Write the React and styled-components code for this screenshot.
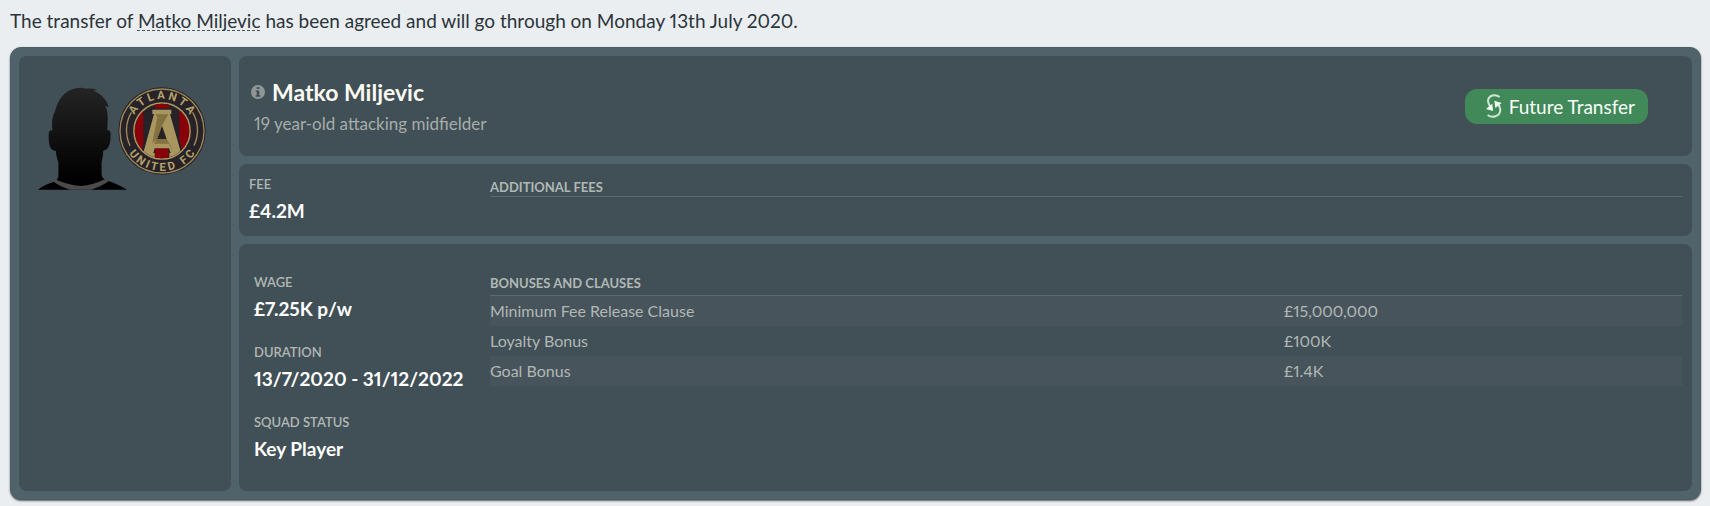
import React from "react";
import styled, { createGlobalStyle } from "styled-components";

const GlobalStyle = createGlobalStyle`
  * { box-sizing: border-box; }
  body {
    margin: 0;
    background: #ebeef1;
    color: #2a343a;
    font-family: Lato, "Liberation Sans", sans-serif;
    font-variant-numeric: proportional-nums;
  }
`;

const Page = styled.main`
  padding: 8px 9px 4px 10px;
`;

const Message = styled.p`
  margin: 0 0 13px;
  font-size: 19px;
  line-height: 26px;
`;

const PlayerLink = styled.a`
  color: inherit;
  text-decoration: underline dashed #4a555b 1px;
  text-underline-offset: 2px;
  text-decoration-skip-ink: none;
`;

const Card = styled.article`
  display: grid;
  grid-template-columns: 212px minmax(0, 1fr);
  gap: 8px;
  padding: 8px;
  border: 1px solid #4b5e64;
  border-radius: 11px;
  background: #50636a;
  box-shadow: 0 1px 2px rgba(0, 0, 0, 0.6);
`;

const Panel = styled.section`
  border-radius: 8px;
  background: #414f56;
`;

const Portrait = styled(Panel)`
  display: flex;
  align-items: flex-start;
  padding: 31px 0 0 19px;
`;

const Silhouette = styled.svg`
  flex: none;
  width: 89px;
  height: 103px;
`;

const Crest = styled.svg`
  flex: none;
  width: 88px;
  height: 88px;
  margin-left: -9px;
`;

const Details = styled.div`
  display: grid;
  gap: 8px;
`;

const Header = styled(Panel)`
  display: flex;
  align-items: center;
  justify-content: space-between;
  min-height: 100px;
  padding: 0 44px 0 12px;
`;

const Name = styled.h1`
  display: flex;
  align-items: center;
  gap: 7px;
  margin: 0;
  padding: 2px 0 6px;
  color: #fbfbf3;
  font-size: 23px;
  line-height: 28px;
  font-weight: 700;
`;

const InfoIcon = styled.svg`
  width: 14px;
  height: 14px;
`;

const Summary = styled.p`
  margin: 0;
  padding-left: 3px;
  color: #a6adab;
  font-size: 17px;
  line-height: 24px;
`;

const Badge = styled.span`
  display: flex;
  align-items: center;
  gap: 7px;
  height: 35px;
  padding: 0 13px 0 21px;
  border-radius: 12px;
  background: #418959;
  color: #fbfffb;
  font-size: 19px;
`;

const SwapIcon = styled.svg`
  width: 16px;
  height: 24px;
`;

const TermsPanel = styled(Panel)`
  display: grid;
  grid-template-columns: 251px minmax(0, 1fr);
  padding: ${(p) => (p.$roomy ? "30px 10px 30px 0" : "12px 10px 13px 0")};
`;

const Stats = styled.dl`
  display: grid;
  gap: 23px;
  margin: 0;
  padding-left: ${(p) => (p.$roomy ? "15px" : "10px")};
`;

const Stat = styled.div`
  display: grid;
  gap: 7px;
`;

const StatLabel = styled.dt`
  color: #b0b8b5;
  font-size: 13px;
  line-height: 16px;
  font-weight: 600;
  text-transform: uppercase;
`;

const StatValue = styled.dd`
  margin: 0;
  color: #ffffff;
  font-size: 19px;
  line-height: 24px;
  font-weight: 700;
  white-space: nowrap;
`;

const FeesHeading = styled.h2`
  align-self: start;
  margin: 0;
  padding: 3px 0 1px;
  border-bottom: 1px solid #586a72;
  color: #b0b8b5;
  font-size: 13px;
  line-height: 16px;
  font-weight: 700;
  text-transform: uppercase;
`;

const Clauses = styled.table`
  align-self: start;
  width: 100%;
  border-collapse: collapse;
  table-layout: fixed;
  color: #b0b8b5;
  font-size: 16px;
`;

const ValueColumn = styled.col`
  width: 33.4%;
`;

const ClausesHead = styled.th`
  height: 21px;
  padding: 1px 0 4px;
  border-bottom: 1px solid #586a72;
  font-size: 13px;
  line-height: 16px;
  font-weight: 700;
  text-align: left;
  text-transform: uppercase;
`;

const ClauseRow = styled.tr`
  height: 30px;
  &:nth-child(odd) { background: #48545c; }
`;

const ClauseName = styled.th`
  padding: 0;
  font-weight: 400;
  text-align: left;
`;

const ClauseValue = styled.td`
  padding: 0;
`;

const terms = [
  ["Wage", "£7.25K p/w"],
  ["Duration", "13/7/2020 - 31/12/2022"],
  ["Squad status", "Key Player"],
];

const clauses = [
  ["Minimum Fee Release Clause", "£15,000,000"],
  ["Loyalty Bonus", "£100K"],
  ["Goal Bonus", "£1.4K"],
];

function PlayerSilhouette() {
  return (
    <Silhouette viewBox="25 38 266 308" role="img" aria-label="Player">
      <defs>
        <linearGradient id="skin" x1="0" y1="0" x2="0" y2="1">
          <stop offset="0" stopColor="#242424" />
          <stop offset="0.9" stopColor="#000" />
        </linearGradient>
      </defs>
      <path
        fill="url(#skin)"
        d="M76 110 C84 76 104 51 132 43 C146 39 158 39 168 43 C180 42 192 43 202 46 L191 49
        C202 53 213 60 219 68 C227 76 233 87 237 97 L226 95 C232 106 235 125 233 145 L232 168
        C240 166 243 172 242 184 C242 203 238 225 224 227 L220 229 C220 242 217 254 215 264
        L215 300 Q217 315 234 318 C256 325 276 335 291 345 L25 345 C39 334 58 326 76 320
        Q87 314 86 300 L86 264 C81 251 79 240 78 229 C66 229 60 220 58 205 C57 190 55 168 62 167
        L68 168 C65 147 67 127 76 110Z"
      />
      <path
        fill="#4b4b4b"
        d="M76 314 Q113 331 153 334 Q190 331 226 313 L237 319 Q215 335 184 345 L121 345 Q91 336 68 319Z"
      />
    </Silhouette>
  );
}

function ClubCrest() {
  return (
    <Crest viewBox="0 0 264 264" role="img" aria-label="Atlanta United FC">
      <defs>
        <path id="crestTop" d="M36 132 A96 96 0 0 1 228 132" />
        <path id="crestBottom" d="M12 132 A120 120 0 0 0 252 132" />
        <clipPath id="crestCore"><circle cx="132" cy="132" r="82" /></clipPath>
      </defs>
      <circle cx="132" cy="132" r="131" fill="#272227" />
      <circle cx="132" cy="132" r="126" fill="none" stroke="#9e8958" strokeWidth="4" />
      <circle cx="132" cy="132" r="84" fill="#272227" stroke="#a89460" strokeWidth="5" />
      <g clipPath="url(#crestCore)">
        <path fill="#88000a" d="M48 48H76V216H48Z M111 48H153V216H111Z M184 48H216V216H184Z" />
        <path
          fill="#272227"
          d="M100 64 H163 V84 H159 L195 196 V213 H151 V184 H112 V213 H69 V196 L105 84 H100Z"
        />
        <path fill="#88000a" d="M112 190H151V216H112Z" />
        <path
          fill="#a9965f"
          fillRule="evenodd"
          d="M103 68 H160 V81 H156 L189 197 H192 V210 H154 V198 H158 L153 184 H110 L106 198 H110
          V210 H72 V197 H76 L108 81 H103Z M132 116 L117 156 H146Z"
        />
        <path fill="#83713f" d="M112 82 H151 L132 116 L117 156 L103 168 L118 90Z M146 156 L158 176 L166 196 L153 170 L108 170 L117 156Z" />
      </g>
      <path
        fill="none"
        stroke="#a08b59"
        strokeWidth="4"
        d="M40 76 A107 107 0 0 0 36 176 M224 76 A107 107 0 0 1 228 176"
      />
      <g fill="#b4a16b" fontFamily="Roboto, sans-serif" fontWeight="700" fontSize="34" textAnchor="middle">
        <text>
          <textPath href="#crestTop" startOffset="50%">A T L A N T A</textPath>
        </text>
        <text>
          <textPath href="#crestBottom" startOffset="50%">U N I T E D &#160; F C</textPath>
        </text>
      </g>
    </Crest>
  );
}

export default function App() {
  return (
    <>
      <GlobalStyle />
      <Page>
        <Message>
          The transfer of <PlayerLink href="#player">Matko Miljevic</PlayerLink> has been agreed and will go
          through on Monday 13th July 2020.
        </Message>
        <Card>
          <Portrait>
            <PlayerSilhouette />
            <ClubCrest />
          </Portrait>
          <Details>
            <Header>
              <div>
                <Name id="player">
                  <InfoIcon viewBox="0 0 14 14" aria-hidden="true">
                    <circle cx="7" cy="7" r="7" fill="#8f9694" />
                    <path fill="#414f56" d="M5.7 2h2.6v2H5.7Z M4.7 5.4h3.6v4.8h1v1.5H4.7v-1.5h1V6.9h-1Z" />
                  </InfoIcon>
                  Matko Miljevic
                </Name>
                <Summary>19 year-old attacking midfielder</Summary>
              </div>
              <Badge>
                <SwapIcon viewBox="0 0 48 72" aria-hidden="true">
                  <g fill="none" stroke="#cfe6d5" strokeWidth="6">
                    <path d="M41 9 C28 -1 8 4 6 20 Q6 28 13 38" />
                    <path d="M5 63 C18 73 42 68 43 48 Q43 38 36 30" />
                  </g>
                  <path fill="#f4fff6" d="M0 45 L19 29 L21 51Z M25 20 L47 27 L28 42Z" />
                </SwapIcon>
                Future Transfer
              </Badge>
            </Header>
            <TermsPanel>
              <Stats>
                <Stat>
                  <StatLabel>Fee</StatLabel>
                  <StatValue>£4.2M</StatValue>
                </Stat>
              </Stats>
              <FeesHeading>Additional fees</FeesHeading>
            </TermsPanel>
            <TermsPanel $roomy>
              <Stats $roomy>
                {terms.map(([label, value]) => (
                  <Stat key={label}>
                    <StatLabel>{label}</StatLabel>
                    <StatValue>{value}</StatValue>
                  </Stat>
                ))}
              </Stats>
              <Clauses>
                <colgroup>
                  <col />
                  <ValueColumn />
                </colgroup>
                <thead>
                  <tr>
                    <ClausesHead colSpan={2} scope="colgroup">Bonuses and clauses</ClausesHead>
                  </tr>
                </thead>
                <tbody>
                  {clauses.map(([name, value]) => (
                    <ClauseRow key={name}>
                      <ClauseName scope="row">{name}</ClauseName>
                      <ClauseValue>{value}</ClauseValue>
                    </ClauseRow>
                  ))}
                </tbody>
              </Clauses>
            </TermsPanel>
          </Details>
        </Card>
      </Page>
    </>
  );
}
